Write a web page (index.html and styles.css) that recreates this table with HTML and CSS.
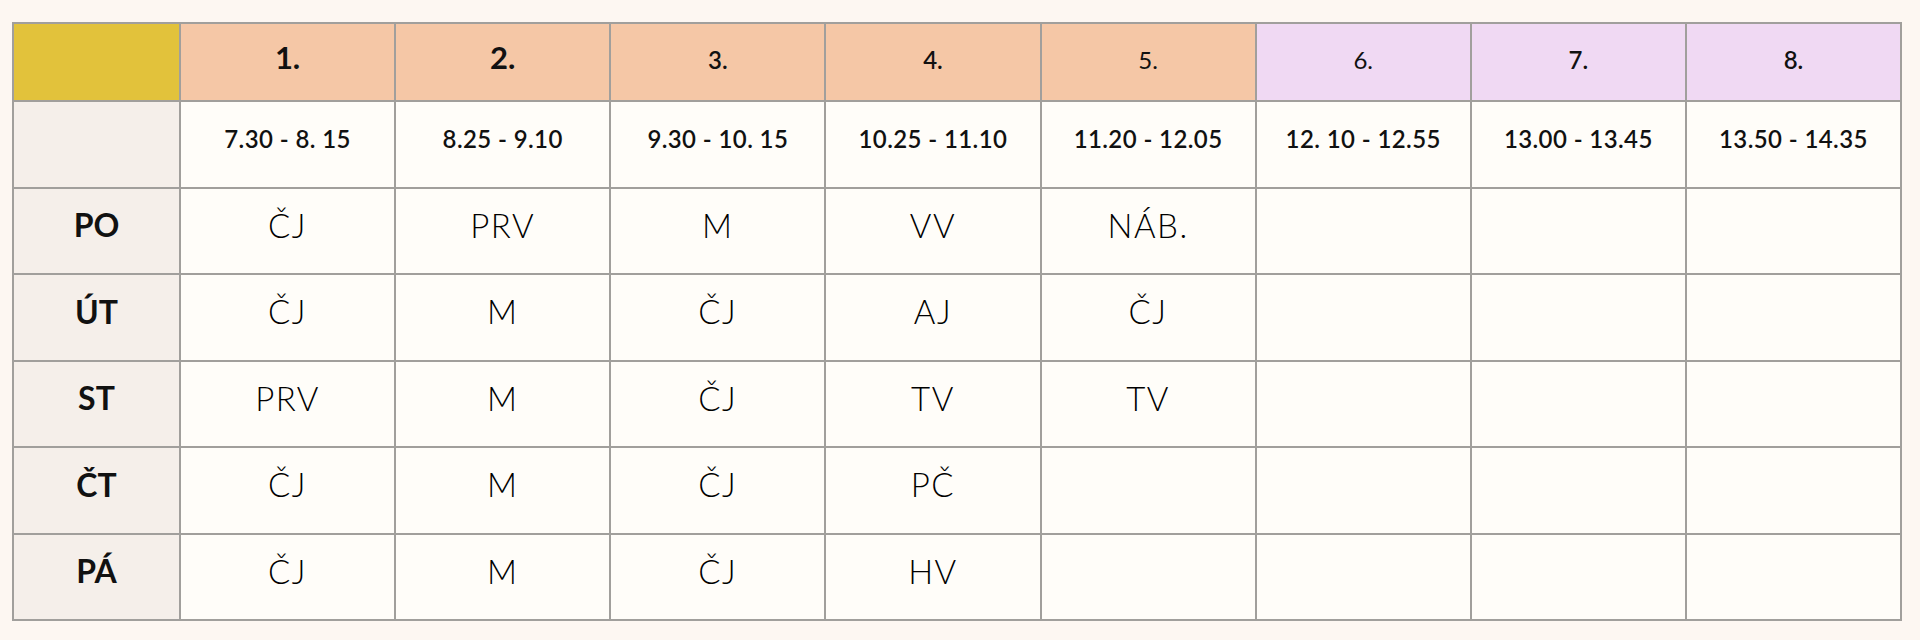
FILE: index.html
```html
<!DOCTYPE html>
<html lang="cs">
<head>
<meta charset="utf-8">
<title>Rozvrh hodin</title>
<link rel="stylesheet" href="styles.css">
</head>
<body>
<div class="page">
  <div class="grid">
    <div class="cell corner"></div>
    <div class="cell h-am big">1.</div>
    <div class="cell h-am big">2.</div>
    <div class="cell h-am semi">3.</div>
    <div class="cell h-am semi">4.</div>
    <div class="cell h-am reg">5.</div>
    <div class="cell h-pm reg">6.</div>
    <div class="cell h-pm semi">7.</div>
    <div class="cell h-pm semi">8.</div>

    <div class="cell day"></div>
    <div class="cell time">7.30 - 8. 15</div>
    <div class="cell time">8.25 - 9.10</div>
    <div class="cell time">9.30 - 10. 15</div>
    <div class="cell time">10.25 - 11.10</div>
    <div class="cell time">11.20 - 12.05</div>
    <div class="cell time">12. 10 - 12.55</div>
    <div class="cell time">13.00 - 13.45</div>
    <div class="cell time">13.50 - 14.35</div>

    <div class="cell day">PO</div>
    <div class="cell subj">ČJ</div>
    <div class="cell subj">PRV</div>
    <div class="cell subj">M</div>
    <div class="cell subj">VV</div>
    <div class="cell subj">NÁB.</div>
    <div class="cell subj"></div>
    <div class="cell subj"></div>
    <div class="cell subj"></div>

    <div class="cell day">ÚT</div>
    <div class="cell subj">ČJ</div>
    <div class="cell subj">M</div>
    <div class="cell subj">ČJ</div>
    <div class="cell subj">AJ</div>
    <div class="cell subj">ČJ</div>
    <div class="cell subj"></div>
    <div class="cell subj"></div>
    <div class="cell subj"></div>

    <div class="cell day">ST</div>
    <div class="cell subj">PRV</div>
    <div class="cell subj">M</div>
    <div class="cell subj">ČJ</div>
    <div class="cell subj">TV</div>
    <div class="cell subj">TV</div>
    <div class="cell subj"></div>
    <div class="cell subj"></div>
    <div class="cell subj"></div>

    <div class="cell day">ČT</div>
    <div class="cell subj">ČJ</div>
    <div class="cell subj">M</div>
    <div class="cell subj">ČJ</div>
    <div class="cell subj">PČ</div>
    <div class="cell subj"></div>
    <div class="cell subj"></div>
    <div class="cell subj"></div>
    <div class="cell subj"></div>

    <div class="cell day">PÁ</div>
    <div class="cell subj">ČJ</div>
    <div class="cell subj">M</div>
    <div class="cell subj">ČJ</div>
    <div class="cell subj">HV</div>
    <div class="cell subj"></div>
    <div class="cell subj"></div>
    <div class="cell subj"></div>
    <div class="cell subj"></div>
  </div>
</div>
</body>
</html>
```

FILE: styles.css
```css
html, body {
  margin: 0;
  padding: 0;
  background: #fdf7f2;
}

body {
  font-family: Lato, "Open Sans", "DejaVu Sans", sans-serif;
  color: #111111;
}

.page {
  padding: 22px 18px 22px 12px;
}

.grid {
  width: 1890px;
  box-sizing: border-box;
  display: grid;
  grid-template-columns: 165px repeat(8, 1fr);
  grid-template-rows: 76px repeat(6, 84.5px);
  gap: 2px;
  padding: 2px;
  background: #a19f9c;
}

.cell {
  display: flex;
  align-items: center;
  justify-content: center;
  box-sizing: border-box;
  padding-bottom: 12px;
  background: #fffdf9;
  white-space: nowrap;
}

.corner {
  background: #e2c23b;
}

.h-am {
  background: #f5c7a6;
}

.h-pm {
  background: #f0d9f3;
}

.big {
  font-size: 31px;
  font-weight: 700;
  padding-bottom: 10px;
}

.semi {
  font-size: 24px;
  font-weight: 600;
  padding-bottom: 6px;
}

.reg {
  font-size: 24px;
  font-weight: 400;
  padding-bottom: 6px;
}

.time {
  font-size: 24px;
  font-weight: 600;
  letter-spacing: 0.4px;
  padding-bottom: 11px;
}

.day {
  background: #f5efea;
  font-size: 32px;
  font-weight: 700;
}

.subj {
  font-size: 33px;
  font-weight: 300;
  color: #000000;
  letter-spacing: 1.5px;
}
```
